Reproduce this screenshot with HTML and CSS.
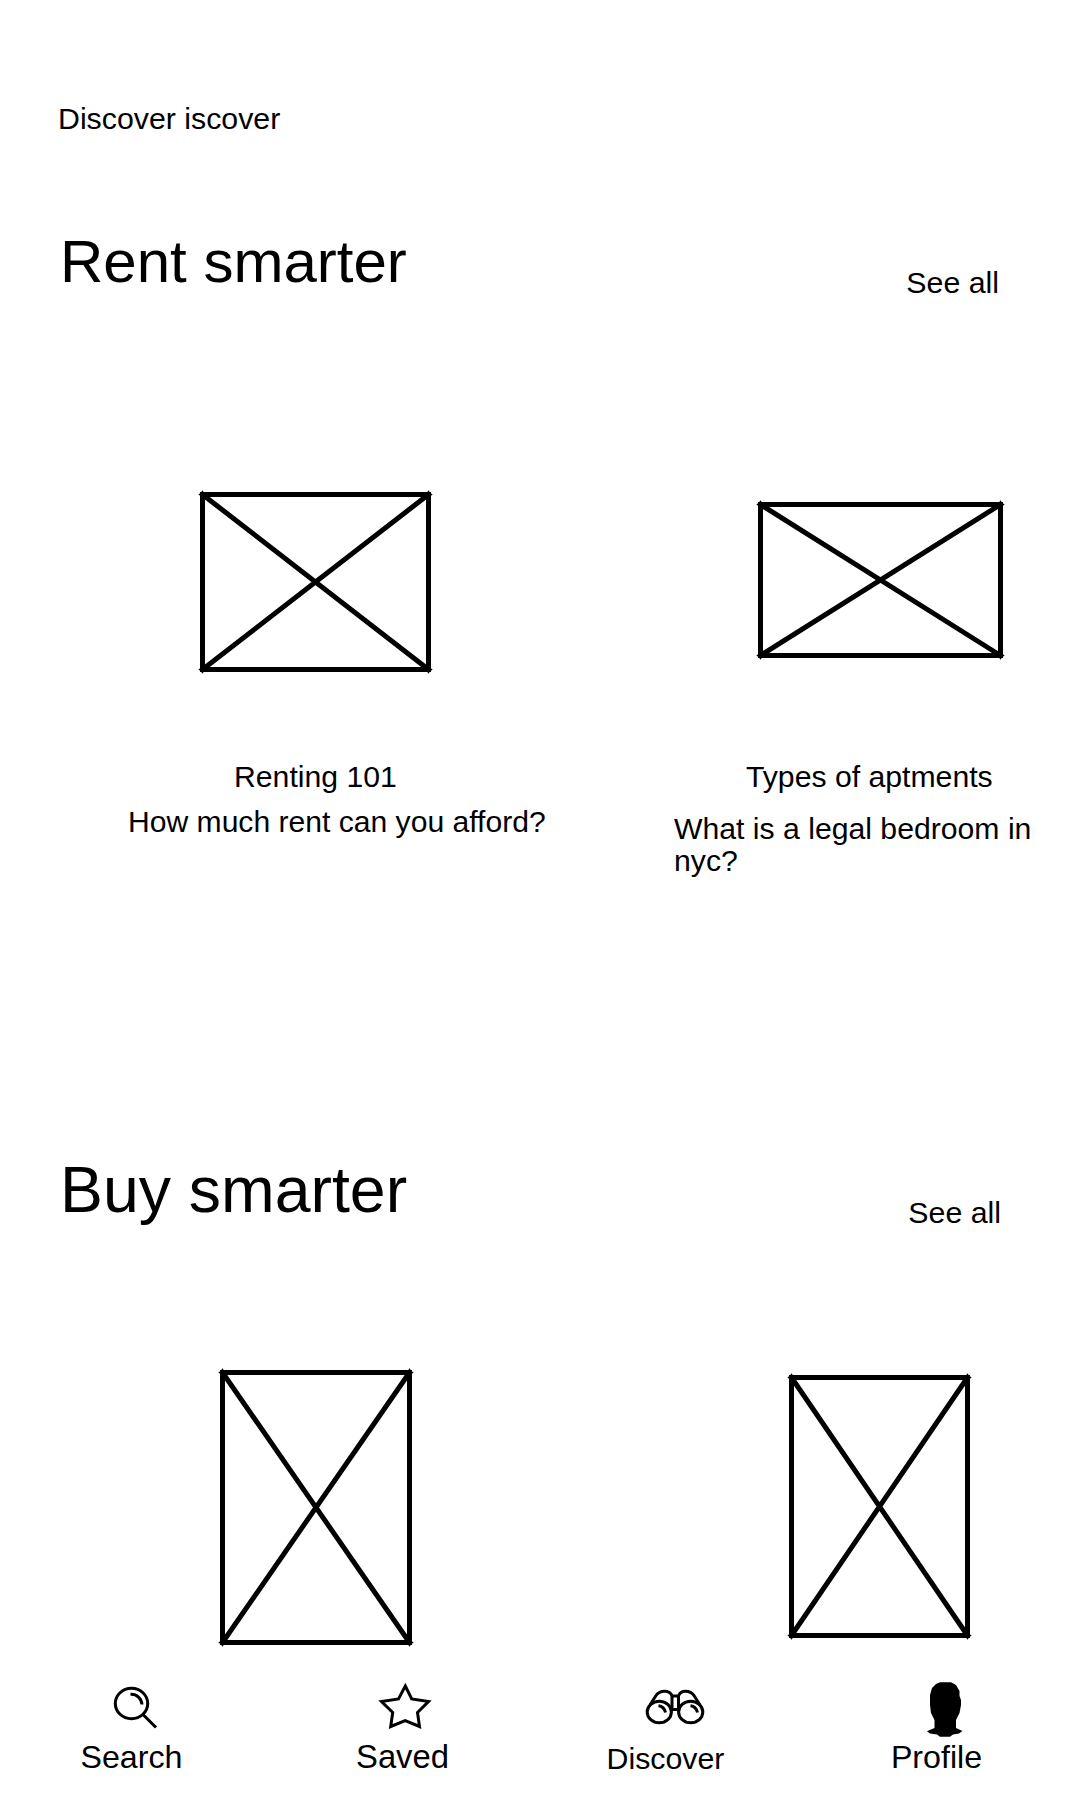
FILE: index.html
```html
<!DOCTYPE html>
<html lang="en">
<head>
<meta charset="utf-8">
<title>Discover</title>
<link rel="stylesheet" href="styles.css">
</head>
<body>
<svg class="defs" width="0" height="0">
  <defs><path id="spike" d="M0-4.2L1.7-1.7L4.2 0L1.7 1.7L0 4.2L-1.7 1.7L-4.2 0L-1.7-1.7Z"/></defs>
</svg>
<main class="page">
  <header class="top"><p class="text">Discover iscover</p></header>

  <section class="section rent">
    <div class="heading">
      <h1 class="title">Rent smarter</h1>
      <a class="text see-all">See all</a>
    </div>
    <div class="cards">
      <article class="card renting">
        <svg class="picture" width="237" height="186" viewBox="0 0 237 186">
          <path class="frame" d="M5.5 5.5H231.5V180.5H5.5Z"/><path class="frame" d="M5.5 5.5L231.5 180.5M231.5 5.5L5.5 180.5"/>
          <use href="#spike" x="5.500" y="5.5"/><use href="#spike" x="231.500" y="5.5"/><use href="#spike" x="5.500" y="180.5"/><use href="#spike" x="231.500" y="180.5"/>
        </svg>
        <h2 class="text">Renting 101</h2>
        <p class="text caption">How much rent can you afford?</p>
      </article>
      <article class="card types">
        <svg class="picture" width="251" height="162" viewBox="0 0 251 162">
          <path class="frame" d="M5.5 5.5H245.5V156.5H5.5Z"/><path class="frame" d="M5.5 5.5L245.5 156.5M245.5 5.5L5.5 156.5"/>
          <use href="#spike" x="5.500" y="5.5"/><use href="#spike" x="245.500" y="5.5"/><use href="#spike" x="5.500" y="156.5"/><use href="#spike" x="245.500" y="156.5"/>
        </svg>
        <h2 class="text">Types of aptments</h2>
        <p class="text caption">What is a legal bedroom in<br>nyc?</p>
      </article>
    </div>
  </section>

  <section class="section buy">
    <div class="heading">
      <h1 class="title">Buy smarter</h1>
      <a class="text see-all">See all</a>
    </div>
    <div class="cards">
      <article class="card">
        <svg class="picture" width="198" height="281" viewBox="0 0 198 281">
          <path class="frame" d="M5.5 5.5H192.5V275.5H5.5Z"/><path class="frame" d="M5.5 5.5L192.5 275.5M192.5 5.5L5.5 275.5"/>
          <use href="#spike" x="5.5" y="5.500"/><use href="#spike" x="192.5" y="5.500"/><use href="#spike" x="5.5" y="275.500"/><use href="#spike" x="192.5" y="275.500"/>
        </svg>
      </article>
      <article class="card second">
        <svg class="picture" width="187" height="269" viewBox="0 0 187 269">
          <path class="frame" d="M5.5 5.5H181.5V263.5H5.5Z"/><path class="frame" d="M5.5 5.5L181.5 263.5M181.5 5.5L5.5 263.5"/>
          <use href="#spike" x="5.5" y="5.500"/><use href="#spike" x="181.5" y="5.500"/><use href="#spike" x="5.5" y="263.500"/><use href="#spike" x="181.5" y="263.500"/>
        </svg>
      </article>
    </div>
  </section>

  <nav class="nav">
    <a class="item search">
      <svg class="icon" viewBox="101 1680 61 60">
        <ellipse cx="131.5" cy="1703.5" rx="16.2" ry="15.2"/>
        <path d="M130.5 1694.3C137 1694 141.5 1698.500 142 1704.500M143 1714.500L156 1727.500"/>
      </svg>
      <span class="label">Search</span>
    </a>
    <a class="item saved">
      <svg class="icon" viewBox="372 1680 61 60">
        <path d="M405.300 1686L411.700 1699L428.500 1701.500L417.500 1712.500L419.500 1726.500L405.200 1720.500L390.700 1726.500L392.700 1712.500L381.500 1701.500L398.500 1699Z"/>
      </svg>
      <span class="label">Saved</span>
    </a>
    <a class="item discover">
      <svg class="icon" viewBox="635 1680 61 60">
        <ellipse cx="659.300" cy="1712" rx="12.100" ry="10.800"/>
        <ellipse cx="690.700" cy="1712" rx="12.100" ry="10.800"/>
        <path d="M650 1705L656 1695.500Q659 1691.300 664.500 1691.300Q670.500 1691.300 672 1696V1710M700 1705L694 1695.500Q691 1691.300 685.500 1691.300Q680 1691.300 678.500 1696V1710M672 1696H679M671 1709.500H679"/>
        <path d="M658.500 1705.800Q664 1706.500 665.500 1712.500M690.500 1705.800Q696 1706.500 697.500 1712.500"/>
      </svg>
      <span class="label">Discover</span>
    </a>
    <a class="item profile">
      <svg class="icon solid" viewBox="906 1680 61 60">
        <path d="M940 1682.300H951L956 1685L959.500 1691V1696L961 1700V1705L959.500 1713L956 1720V1728L962.500 1731L959 1733.500L953 1734.500L950 1736.700H940L937 1734.500L930 1733.500L927 1731.300L934.500 1728V1720L931 1713L930 1705V1695L932 1688L936 1684Z"/>
      </svg>
      <span class="label">Profile</span>
    </a>
  </nav>
</main>
</body>
</html>
```
FILE: styles.css
```css
* { box-sizing: border-box; }
body { margin: 0; background: #fff; color: #000; font-family: "Liberation Sans", Arial, sans-serif; }
.defs { display: block; height: 0; }
.page { display: flex; flex-direction: column; width: 1080px; height: 1800px; overflow: hidden; }
h1, h2, p { margin: 0; font-weight: 400; }
.text { font-size: 30.2px; line-height: 32px; white-space: nowrap; }
.top { height: 200px; padding: 103px 0 0 58px; }
.top .text { font-size: 30.3px; }
.heading { display: flex; justify-content: space-between; align-items: flex-start; height: 74px; }
.title { font-size: 60px; line-height: 70px; white-space: nowrap; }
.see-all { font-size: 30.3px; }
.cards { display: flex; align-items: flex-start; }
.card { display: flex; flex-direction: column; align-items: flex-start; }
.picture { display: block; }
.frame { fill: none; stroke: #000; stroke-width: 5; }

.rent { height: 930px; padding-top: 27px; }
.rent .title { margin-left: 60px; }
.rent .see-all { margin: 40px 81px 0 0; }
.rent .cards { padding-top: 188px; }
.renting { width: 628px; padding-left: 128px; }
.renting .picture { margin-left: 69px; }
.renting .text { margin: 86px 0 0 106px; }
.renting .caption { margin: 13px 0 0; font-size: 30.1px; }
.types { padding: 10px 0 0 46px; }
.types .picture { margin-left: 81px; }
.types .text { margin: 100px 0 0 72px; }
.types .caption { margin: 20px 0 0; }

.buy { height: 530px; padding-top: 25px; }
.buy .title { margin-left: 60px; font-size: 64.4px; }
.buy .see-all { margin: 42px 79px 0 0; }
.buy .cards { padding: 138px 0 0 217px; }
.buy .second { padding: 5px 0 0 371px; }

.nav { display: grid; grid-template-columns: 263px 279px 247px 1fr; padding-top: 20px; }
.item { display: flex; flex-direction: column; align-items: center; }
.icon { width: 61px; height: 60px; fill: none; stroke: #000; stroke-width: 3; overflow: visible; }
.solid { fill: #000; stroke: none; }
.label { font-size: 32.2px; line-height: 34px; white-space: nowrap; }
.saved .label { font-size: 32.8px; }
.discover .label { font-size: 30.3px; line-height: 38px; }
.profile { padding-left: 4px; }
```
